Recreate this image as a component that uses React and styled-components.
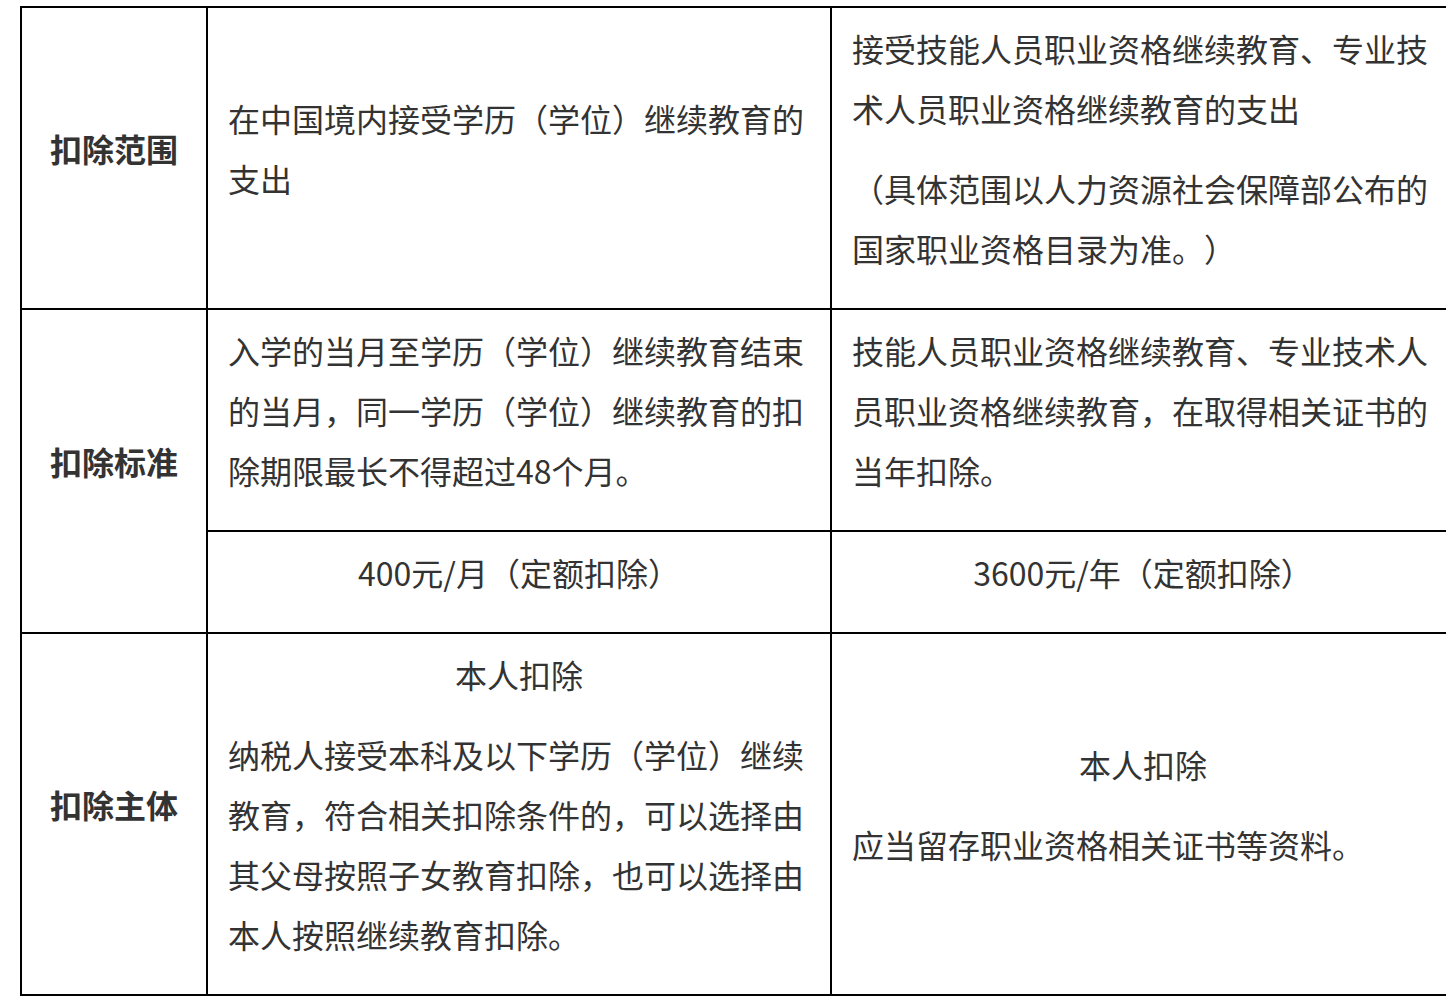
import { createGlobalStyle, styled } from "styled-components"

const GlobalStyle = createGlobalStyle`
  html, body {
    margin: 0;
    padding: 0;
    background: #ffffff;
    overflow: hidden;
  }
  body {
    font-family: "Noto Sans CJK SC", "Noto Sans", sans-serif;
    color: #333333;
  }
`

function App() {
  return (
    <>
      <GlobalStyle />
      <PageWrapper>
        <Table>
          <colgroup>
            <col style={{ width: 186 }} />
            <col style={{ width: 624 }} />
            <col style={{ width: 624 }} />
          </colgroup>
          <tbody>
            <tr>
              <LabelCell>
                <Para $center>扣除范围</Para>
              </LabelCell>
              <Cell>
                <Para>在中国境内接受学历（学位）继续教育的支出</Para>
              </Cell>
              <Cell>
                <Para>接受技能人员职业资格继续教育、专业技术人员职业资格继续教育的支出</Para>
                <Para>（具体范围以人力资源社会保障部公布的国家职业资格目录为准。）</Para>
              </Cell>
            </tr>
            <tr>
              <LabelCell rowSpan={2}>
                <Para $center>扣除标准</Para>
              </LabelCell>
              <Cell>
                <Para>入学的当月至学历（学位）继续教育结束的当月，同一学历（学位）继续教育的扣除期限最长不得超过48个月。</Para>
              </Cell>
              <Cell>
                <Para>技能人员职业资格继续教育、专业技术人员职业资格继续教育，在取得相关证书的当年扣除。</Para>
              </Cell>
            </tr>
            <tr>
              <Cell>
                <Para $center>400元/月（定额扣除）</Para>
              </Cell>
              <Cell>
                <Para $center>3600元/年（定额扣除）</Para>
              </Cell>
            </tr>
            <tr>
              <LabelCell>
                <Para $center>扣除主体</Para>
              </LabelCell>
              <Cell>
                <Para $center>本人扣除</Para>
                <Para>纳税人接受本科及以下学历（学位）继续教育，符合相关扣除条件的，可以选择由其父母按照子女教育扣除，也可以选择由本人按照继续教育扣除。</Para>
              </Cell>
              <Cell>
                <Para $center>本人扣除</Para>
                <Para>应当留存职业资格相关证书等资料。</Para>
              </Cell>
            </tr>
          </tbody>
        </Table>
      </PageWrapper>
    </>
  )
}

export default App

const PageWrapper = styled.div`
  box-sizing: border-box;
  width: 100%;
  padding: 6px 0 0 20px;
  overflow: hidden;
`

const Table = styled.table`
  width: 1436px;
  table-layout: fixed;
  border-collapse: separate;
  border-spacing: 0;
  border-top: 2px solid #000;
  border-left: 2px solid #000;
`

const Cell = styled.td`
  border-right: 2px solid #000;
  border-bottom: 2px solid #000;
  padding: 10px 20px 10px 20px;
  vertical-align: middle;
  font-size: 32px;
  line-height: 60px;
  color: #333333;
  text-spacing-trim: space-all;
`

const LabelCell = styled(Cell)`
  padding: 10px 8px 10px 8px;
  font-weight: 700;
`

const Para = styled.p`
  margin: 0 0 20px 0;
  text-align: ${(p) => (p.$center ? "center" : "left")};
`
